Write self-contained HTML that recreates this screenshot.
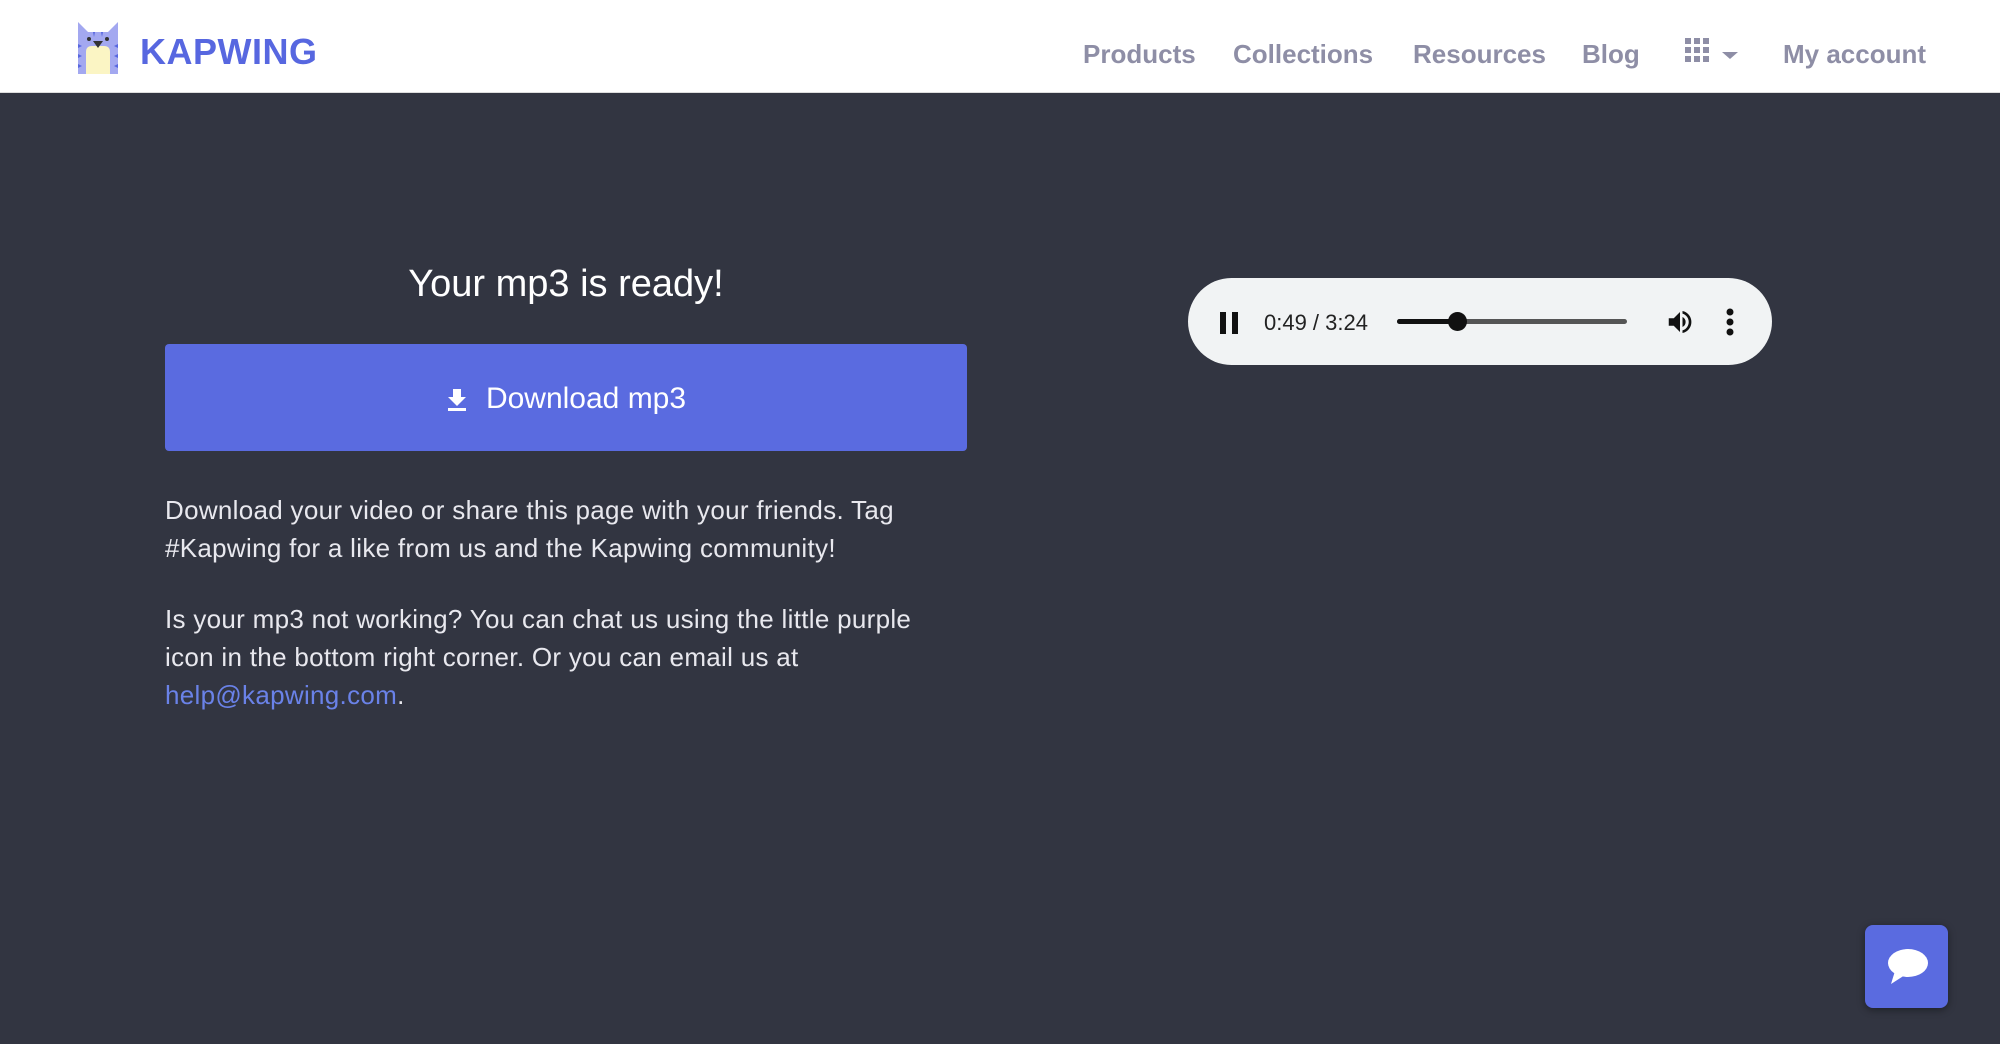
<!DOCTYPE html>
<html><head><meta charset="utf-8"><style>
*{margin:0;padding:0;box-sizing:border-box}
body{width:2000px;height:1044px;background:#323541;font-family:"Liberation Sans",sans-serif;overflow:hidden;position:relative}
.hdr{position:absolute;left:0;top:0;width:2000px;height:93px;background:#fff;border-bottom:1px solid #ddd}
.brand{position:absolute;left:140px;top:31px;font-size:36px;font-weight:bold;color:#5767e0;letter-spacing:0.5px}
.nav a{position:absolute;top:39px;font-size:26px;font-weight:bold;color:#8e8ea6;text-decoration:none}
h1{position:absolute;left:165px;width:802px;top:263px;text-align:center;color:#fff;font-size:38px;font-weight:normal}
.btn{position:absolute;left:165px;top:344px;width:802px;height:107px;background:#5a6be0;border-radius:4px;color:#fff;font-size:30px;display:flex;align-items:center;justify-content:center;padding-top:2px}
p{position:absolute;left:165px;width:800px;color:#e8e8ee;font-size:26px;line-height:38px;letter-spacing:0.3px}
p a{color:#6a82e8;text-decoration:none}
.player{position:absolute;left:1188px;top:278px;width:584px;height:87px;background:#f1f3f4;border-radius:44px}
.chat{position:absolute;left:1865px;top:925px;width:83px;height:83px;background:#5a6be0;border-radius:8px;box-shadow:0 2px 8px rgba(0,0,0,.4)}
</style></head><body>
<div class="hdr">
<svg style="position:absolute;left:78px;top:22px" width="40" height="52" viewBox="0 0 40 52">
<path d="M0 0 L10 10 L30 10 L40 0 L40 52 L0 52Z" fill="#a3a8f0"/>
<path d="M8 52 L8 30 Q8 24 14 24 L26 24 Q32 24 32 30 L32 52Z" fill="#fbf5c4"/>
<circle cx="11" cy="17" r="2" fill="#333"/><circle cx="29" cy="17" r="2" fill="#333"/>
<path d="M15 19 L25 19 L20 26Z" fill="#333"/>
<path d="M0 22l4 2-4 2zM0 32l4 2-4 2zM0 42l4 2-4 2zM40 22l-4 2 4 2zM40 32l-4 2 4 2zM40 42l-4 2 4 2zM15 10l1 5 1-5zM23 10l1 5 1-5z" fill="#5767e0"/>
</svg>
<div class="brand">KAPWING</div>
<div class="nav">
<a style="left:1083px">Products</a><a style="left:1233px">Collections</a><a style="left:1413px">Resources</a><a style="left:1582px">Blog</a><a style="left:1783px">My account</a>
</div>
<svg style="position:absolute;left:1685px;top:38px" width="56" height="26" viewBox="0 0 56 26">
<g fill="#8e8ea6"><rect x="0" y="0" width="6" height="6"/><rect x="9" y="0" width="6" height="6"/><rect x="18" y="0" width="6" height="6"/><rect x="0" y="9" width="6" height="6"/><rect x="9" y="9" width="6" height="6"/><rect x="18" y="9" width="6" height="6"/><rect x="0" y="18" width="6" height="6"/><rect x="9" y="18" width="6" height="6"/><rect x="18" y="18" width="6" height="6"/><path d="M37 14 L53 14 L45 21Z"/></g>
</svg>
</div>
<h1>Your mp3 is ready!</h1>
<div class="btn"><svg width="22" height="24" viewBox="0 0 22 24" style="margin-right:18px"><path d="M7 2h8v8h5l-9 9-9-9h5z M2 21h18v3H2z" fill="#fff"/></svg>Download mp3</div>
<p style="top:491px">Download your video or share this page with your friends. Tag #Kapwing for a like from us and the Kapwing community!</p>
<p style="top:600px">Is your mp3 not working? You can chat us using the little purple icon in the bottom right corner. Or you can email us at <a>help@kapwing.com</a>.</p>
<div class="player">
<svg style="position:absolute;left:30px;top:32px" width="22" height="24"><rect x="2" y="2" width="6" height="22" fill="#111"/><rect x="14" y="2" width="6" height="22" fill="#111"/></svg>
<div style="position:absolute;left:76px;top:32px;font-size:22px;color:#222">0:49 / 3:24</div>
<div style="position:absolute;left:209px;top:41px;width:230px;height:5px;background:#555;border-radius:3px"></div>
<div style="position:absolute;left:209px;top:41px;width:66px;height:5px;background:#111;border-radius:3px"></div>
<div style="position:absolute;left:260px;top:34px;width:19px;height:19px;background:#111;border-radius:50%"></div>
<svg style="position:absolute;left:476px;top:29px" width="32" height="30" viewBox="0 0 24 24"><path d="M3 9v6h4l5 5V4L7 9H3zm13.5 3A4.5 4.5 0 0014 8v8a4.5 4.5 0 002.5-4zM14 3.2v2.1a7 7 0 010 13.4v2.1a9 9 0 000-17.6z" fill="#111"/></svg>
<svg style="position:absolute;left:536px;top:29px" width="12" height="30"><circle cx="6" cy="5" r="3.5" fill="#111"/><circle cx="6" cy="15" r="3.5" fill="#111"/><circle cx="6" cy="25" r="3.5" fill="#111"/></svg>
</div>
<div class="chat"><svg style="position:absolute;left:20px;top:22px" width="44" height="40" viewBox="0 0 44 40"><ellipse cx="23" cy="16" rx="20" ry="14" fill="#fff"/><path d="M10 24 L6 37 L20 28Z" fill="#fff"/></svg></div>
</body></html>
